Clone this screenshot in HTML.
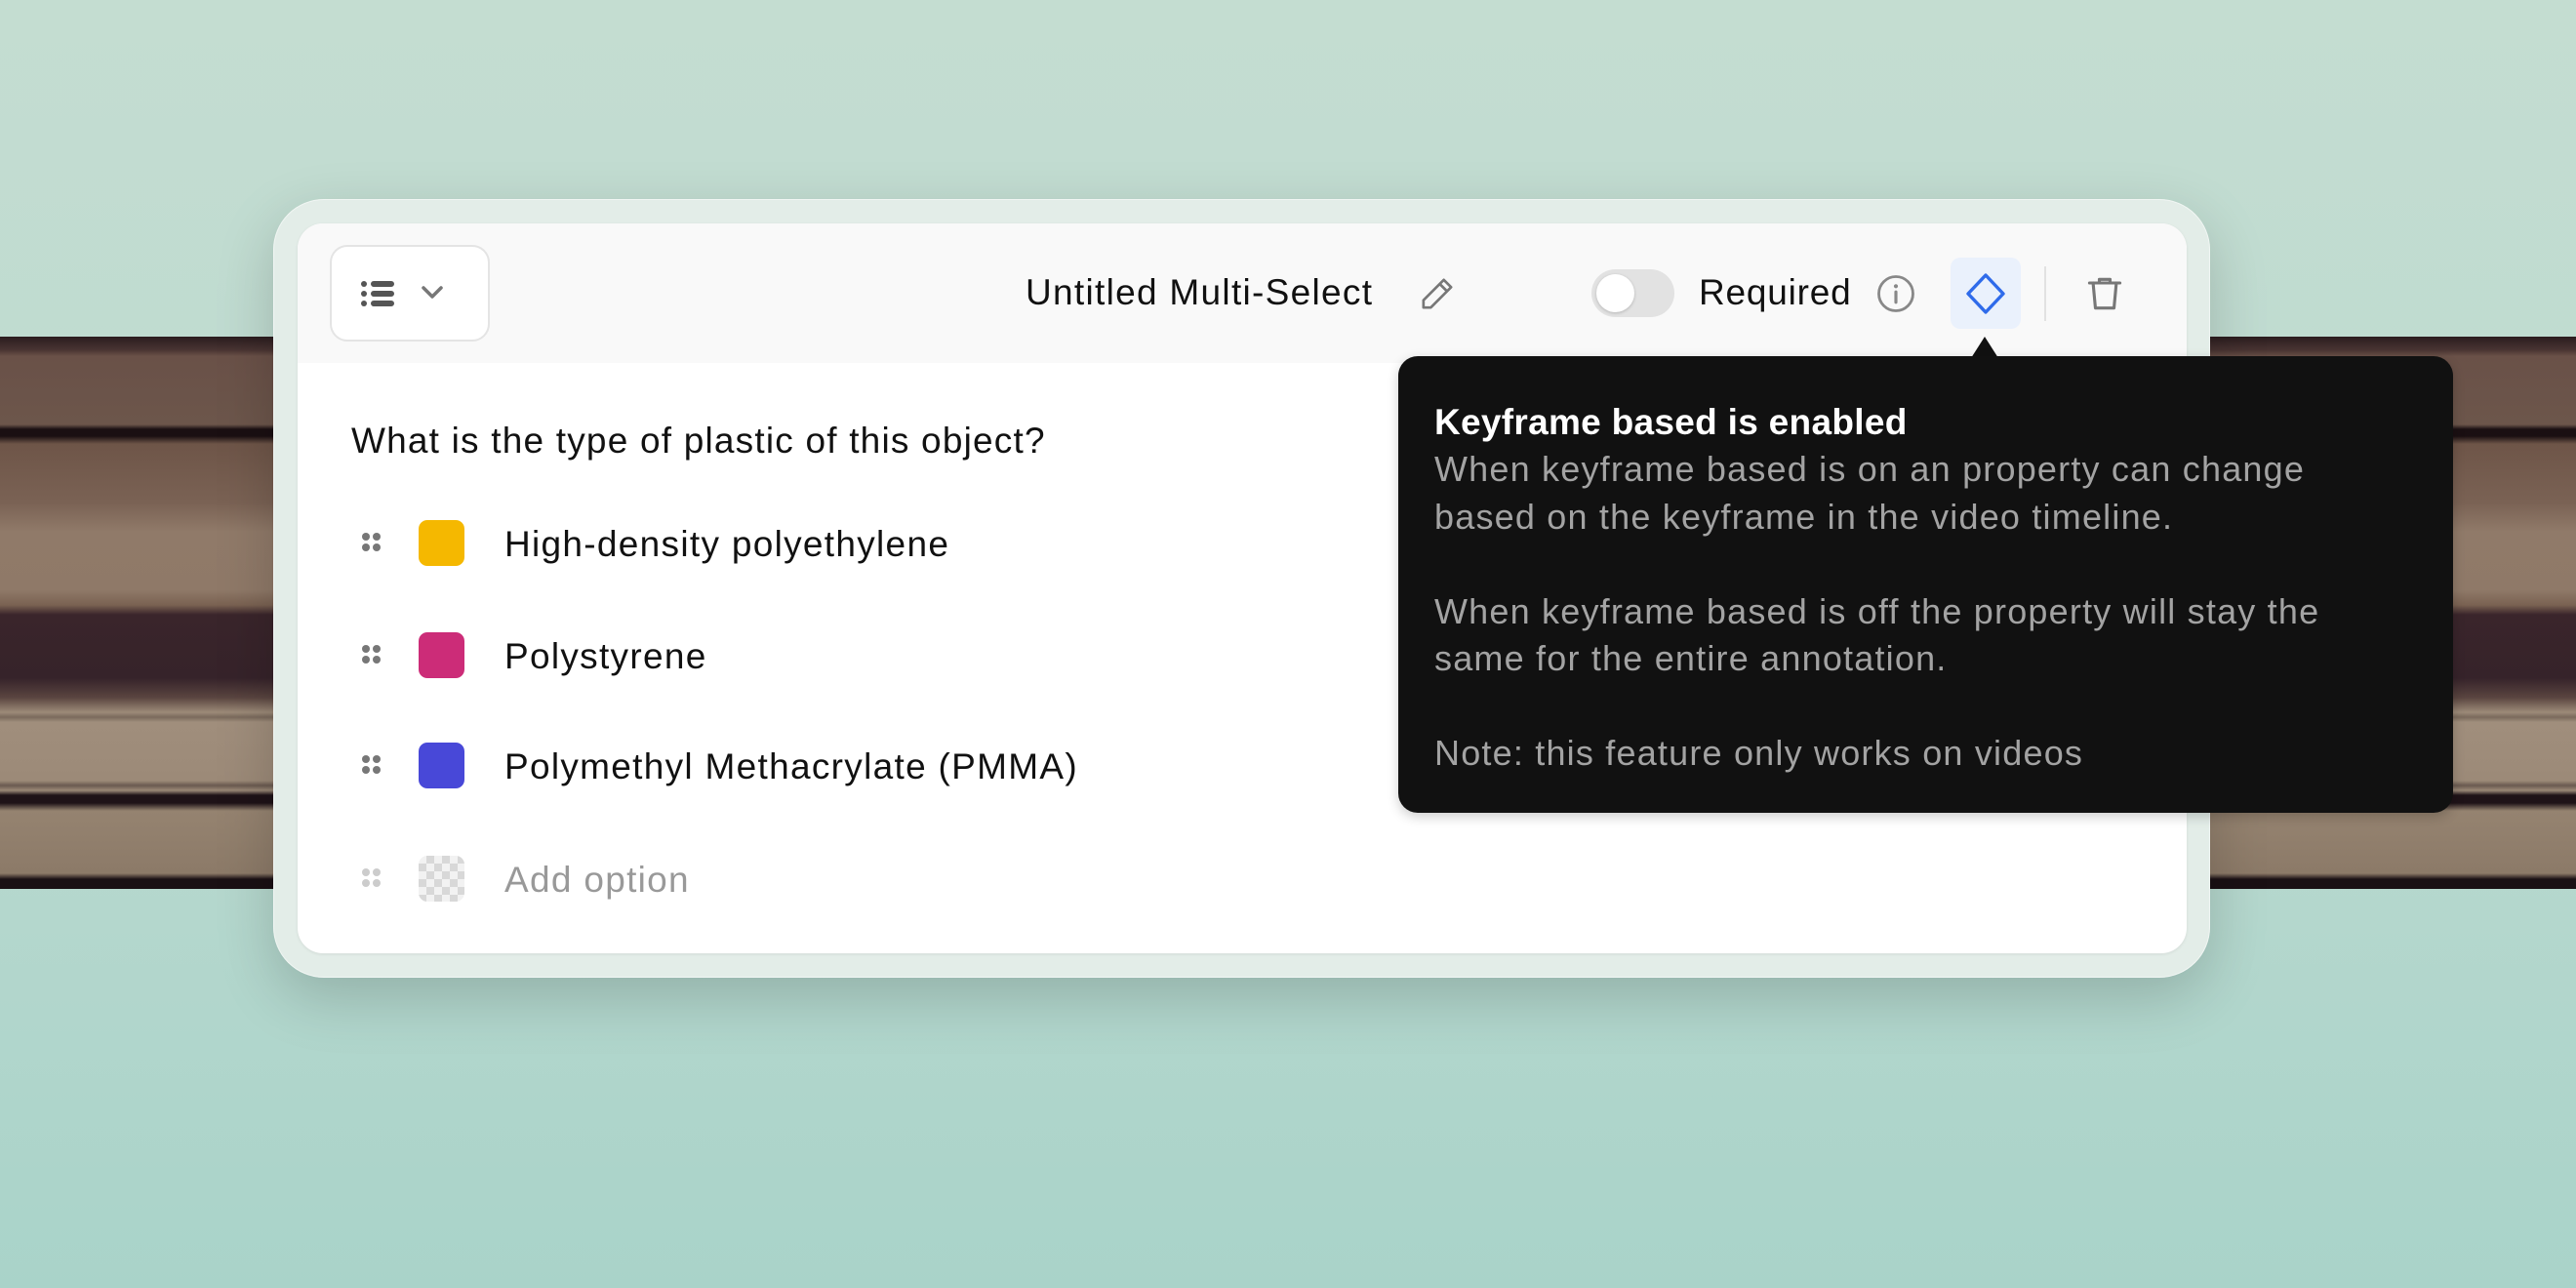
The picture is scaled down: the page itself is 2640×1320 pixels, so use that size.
<!DOCTYPE html>
<html><head><meta charset="utf-8"><style>
*{margin:0;padding:0;box-sizing:border-box}
body{width:2640px;height:1320px;overflow:hidden;position:relative;font-family:"Liberation Sans",sans-serif;background:linear-gradient(180deg,#c4ddd1 0%,#bcdad0 50%,#a9d3c9 100%)}
.band{position:absolute;left:0;right:0;top:345px;height:566px;background:linear-gradient(180deg,#2a1c1e 0px,#4a3533 14px,#6a5148 20px,#6c564b 90px,#1a0f12 95px,#1a0f12 102px,#6e5548 110px,#7a6254 170px,#907a69 200px,#8f7968 260px,#7a6252 275px,#3a252b 285px,#36232a 350px,#5a4540 370px,#9c8a78 385px,#7a6a5c 390px,#a08e7c 395px,#9c8a78 455px,#6a5a50 460px,#9a8876 465px,#1e1217 470px,#1e1217 478px,#958370 486px,#8c7a68 550px,#1a1014 556px,#1a1014 566px)}
.outer{position:absolute;left:280px;top:204px;width:1985px;height:798px;border-radius:52px;background:#e3ede8;box-shadow:0 20px 60px rgba(0,0,0,.18),0 0 0 1px rgba(255,255,255,.5) inset}
.inner{position:absolute;left:305px;top:229px;width:1936px;height:748px;border-radius:26px;background:#fff;overflow:hidden;box-shadow:0 1px 3px rgba(0,0,0,.08)}
.head{position:absolute;left:0;top:0;width:100%;height:143px;background:#f9f9f9}
.dd{position:absolute;left:33px;top:22px;width:164px;height:99px;border:2px solid #e4e4e4;border-radius:18px;background:#fff}
.t{position:absolute;color:#111;font-size:37px;letter-spacing:1.3px;white-space:nowrap}
.row{position:absolute;left:0;height:60px;width:100%}
.dots{position:absolute;left:66px;width:22px;height:22px}
.dots i{position:absolute;width:8px;height:8px;border-radius:50%;background:#777}
.sq{position:absolute;left:124px;width:47px;height:47px;border-radius:9px}
.tip{position:absolute;left:1433px;top:365px;width:1081px;height:468px;background:#111;border-radius:20px;padding:44px 0 0 37px;box-shadow:0 4px 12px rgba(0,0,0,.2)}
.tip h3{color:#fff;font-size:37px;font-weight:bold;line-height:48px;letter-spacing:0.3px}
.tip p{color:#a3a3a3;font-size:36px;line-height:48.5px;letter-spacing:1.2px;white-space:nowrap}
</style></head><body>
<div class="band"></div>
<div class="outer"></div>
<div class="inner">
 <div class="head">
  <div class="dd">
   <svg width="164" height="99" viewBox="0 0 164 99" style="position:absolute;left:-2px;top:-2px">
    <g fill="#555"><circle cx="35" cy="40" r="3"/><circle cx="35" cy="50" r="3"/><circle cx="35" cy="60" r="3"/>
    <rect x="42" y="37" width="24" height="6" rx="3"/><rect x="42" y="47" width="24" height="6" rx="3"/><rect x="42" y="57" width="24" height="6" rx="3"/></g>
    <path d="M96 44l9 9 9-9" fill="none" stroke="#777" stroke-width="3.5" stroke-linecap="round" stroke-linejoin="round"/>
   </svg>
  </div>
  <div class="t" style="left:746px;top:50px">Untitled Multi-Select</div>
  <svg style="position:absolute;left:1148px;top:52px" width="40" height="40" viewBox="0 0 24 24"><path d="M16 3.5l4.5 4.5L8 20.5H3.5V16z M13.5 6l4.5 4.5" fill="none" stroke="#777" stroke-width="1.6" stroke-linejoin="round"/></svg>
  <div style="position:absolute;left:1326px;top:47px;width:85px;height:49px;border-radius:25px;background:#e2e2e2"><div style="position:absolute;left:5px;top:5px;width:39px;height:39px;border-radius:50%;background:#fff;box-shadow:0 1px 3px rgba(0,0,0,.2)"></div></div>
  <div class="t" style="left:1436px;top:50px;letter-spacing:0.8px">Required</div>
  <svg style="position:absolute;left:1617px;top:51px" width="42" height="42" viewBox="0 0 24 24"><circle cx="12" cy="12" r="10" fill="none" stroke="#888" stroke-width="1.6"/><circle cx="12" cy="7.6" r="1.2" fill="#888"/><path d="M12 11v6" stroke="#888" stroke-width="1.8" stroke-linecap="round"/></svg>
  <div style="position:absolute;left:1694px;top:35px;width:72px;height:73px;border-radius:10px;background:#eaf1fc"></div>
  <svg style="position:absolute;left:1706px;top:48px" width="48" height="48" viewBox="0 0 48 48"><path d="M24 5L42 24 24 43 6 24z" fill="none" stroke="#2f6bea" stroke-width="3.4" stroke-linejoin="round"/></svg>
  <div style="position:absolute;left:1790px;top:44px;width:2px;height:56px;background:#e2e2e2"></div>
  <svg style="position:absolute;left:1830px;top:50px" width="44" height="44" viewBox="0 0 24 24"><path d="M3.5 6h17M9 6V4h6v2M5.5 6l1.3 14h10.4L18.5 6" fill="none" stroke="#777" stroke-width="1.7" stroke-linejoin="round" stroke-linecap="round"/></svg>
 </div>
 <div class="t" style="left:55px;top:202px;letter-spacing:1.2px">What is the type of plastic of this object?</div>
 <div class="row" style="top:298px"><div class="dots" style="top:19px"><i style="left:0;top:0"></i><i style="left:11px;top:0"></i><i style="left:0;top:11px"></i><i style="left:11px;top:11px"></i></div><div class="sq" style="top:6px;background:#f5b800"></div><div class="t" style="left:212px;top:10px">High-density polyethylene</div></div>
 <div class="row" style="top:413px"><div class="dots" style="top:19px"><i style="left:0;top:0"></i><i style="left:11px;top:0"></i><i style="left:0;top:11px"></i><i style="left:11px;top:11px"></i></div><div class="sq" style="top:6px;background:#cc2c78"></div><div class="t" style="left:212px;top:10px">Polystyrene</div></div>
 <div class="row" style="top:526px"><div class="dots" style="top:19px"><i style="left:0;top:0"></i><i style="left:11px;top:0"></i><i style="left:0;top:11px"></i><i style="left:11px;top:11px"></i></div><div class="sq" style="top:6px;background:#4848d8"></div><div class="t" style="left:212px;top:10px">Polymethyl Methacrylate (PMMA)</div></div>
 <div class="row" style="top:642px"><div class="dots" style="top:19px"><i style="left:0;top:0;background:#ccc"></i><i style="left:11px;top:0;background:#ccc"></i><i style="left:0;top:11px;background:#ccc"></i><i style="left:11px;top:11px;background:#ccc"></i></div><div class="sq" style="top:6px;background:repeating-conic-gradient(#d8d8d8 0 25%,#f2f2f2 0 50%) 0 0/16px 16px"></div><div class="t" style="left:212px;top:10px;color:#999">Add option</div></div>
</div>
<div style="position:absolute;left:2020px;top:345px;width:0;height:0;border-left:14px solid transparent;border-right:14px solid transparent;border-bottom:22px solid #111"></div>
<div class="tip">
 <h3>Keyframe based is enabled</h3>
 <p>When keyframe based is on an property can change<br>based on the keyframe in the video timeline.<br><br>When keyframe based is off the property will stay the<br>same for the entire annotation.<br><br>Note: this feature only works on videos</p>
</div>
</body></html>
